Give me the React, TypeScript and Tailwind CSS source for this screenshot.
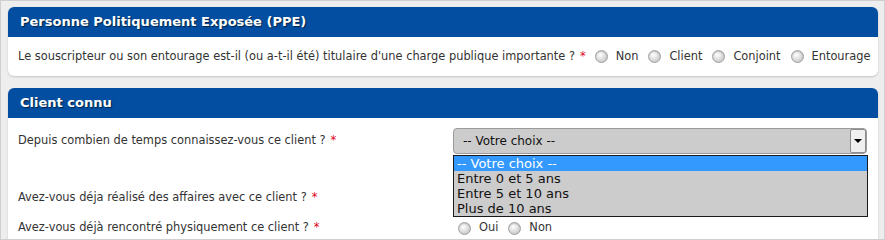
const font = "font-['DejaVu_Sans',Verdana,'Liberation_Sans',sans-serif]";

function Radio({ label }: { label: string }) {
  return (
    <label className="flex items-center gap-[8px] whitespace-nowrap">
      <span className="block w-[13px] h-[13px] rounded-full border border-[#a0a0a0] bg-[radial-gradient(circle_at_40%_35%,#ffffff_0%,#e0e0e0_45%,#b8b8b8_100%)] shadow-[inset_0_1px_1px_rgba(0,0,0,0.15)]" />
      <span>{label}</span>
    </label>
  );
}

function Req() {
  return <span className="text-[#e2001a] ml-[5px]">*</span>;
}

function Panel({ title, children }: { title: string; children: React.ReactNode }) {
  return (
    <div className="rounded-[6px] bg-white shadow-[0_1px_2px_rgba(0,0,0,0.18)]">
      <div className="h-[30px] rounded-t-[6px] bg-[#034ea1] pl-[12px] flex items-center text-white font-bold text-[13px] [text-shadow:1px_1px_1px_rgba(0,0,0,0.55)]">
        {title}
      </div>
      {children}
    </div>
  );
}

export default function App() {
  const options = ["-- Votre choix --", "Entre 0 et 5 ans", "Entre 5 et 10 ans", "Plus de 10 ans"];

  return (
    <div className={`${font} w-[885px] h-[240px] overflow-hidden bg-[#eeeeee] border border-[#cfcfcf] pt-[6px] pl-[7px] pr-[6px] text-[11.4px] text-[#333333]`}>
      <Panel title="Personne Politiquement Exposée (PPE)">
        <div className="h-[39px] pl-[10px] pr-[8px] flex items-center">
          <span className="whitespace-nowrap shrink-0">
            Le souscripteur ou son entourage est-il (ou a-t-il été) titulaire d'une charge publique importante ?
            <Req />
          </span>
          <div className="flex items-center gap-[10px] ml-[9px]">
            <Radio label="Non" />
            <Radio label="Client" />
            <Radio label="Conjoint" />
            <Radio label="Entourage" />
          </div>
        </div>
      </Panel>

      <div className="h-[12px]" />

      <Panel title="Client connu">
        <div className="pl-[10px] pr-[11px] pt-[10px] pb-[20px]">
          <div className="flex items-center h-[26px]">
            <div className="w-[435px]">
              Depuis combien de temps connaissez-vous ce client ?
              <Req />
            </div>
            <div className="relative flex-1">
              <div className="h-[26px] rounded-[4px] border border-[#9a9a9a] bg-[#cccccc] flex items-center pl-[9px] text-[12px] text-[#111]">
                -- Votre choix --
                <span className="absolute right-[1px] top-[1px] w-[16px] h-[24px] bg-[#f0f0f0] border border-[#8d8d8d] rounded-[2px] flex items-center justify-center">
                  <span className="block w-0 h-0 border-l-[4px] border-r-[4px] border-t-[4px] border-l-transparent border-r-transparent border-t-black" />
                </span>
              </div>
              <ul className="absolute z-10 left-0 top-[27px] w-[415px] border border-[#1a1a1a] bg-[#cccccc] text-[13px] text-[#111]">
                {options.map((o, i) => (
                  <li
                    key={o}
                    className={`h-[15px] leading-[15px] pl-[3px] ${i === 0 ? "bg-[#3399ff] text-white" : ""}`}
                  >
                    {o}
                  </li>
                ))}
              </ul>
            </div>
          </div>

          <div className="flex items-center h-[26px] mt-[31px]">
            <div className="w-[435px]">
              Avez-vous déja réalisé des affaires avec ce client ?
              <Req />
            </div>
            <div className="flex-1" />
          </div>

          <div className="flex items-center h-[16px] mt-[9px]">
            <div className="w-[440px]">
              Avez-vous déjà rencontré physiquement ce client ?
              <Req />
            </div>
            <div className="flex items-center gap-[10px]">
              <Radio label="Oui" />
              <Radio label="Non" />
            </div>
          </div>
        </div>
      </Panel>
    </div>
  );
}
